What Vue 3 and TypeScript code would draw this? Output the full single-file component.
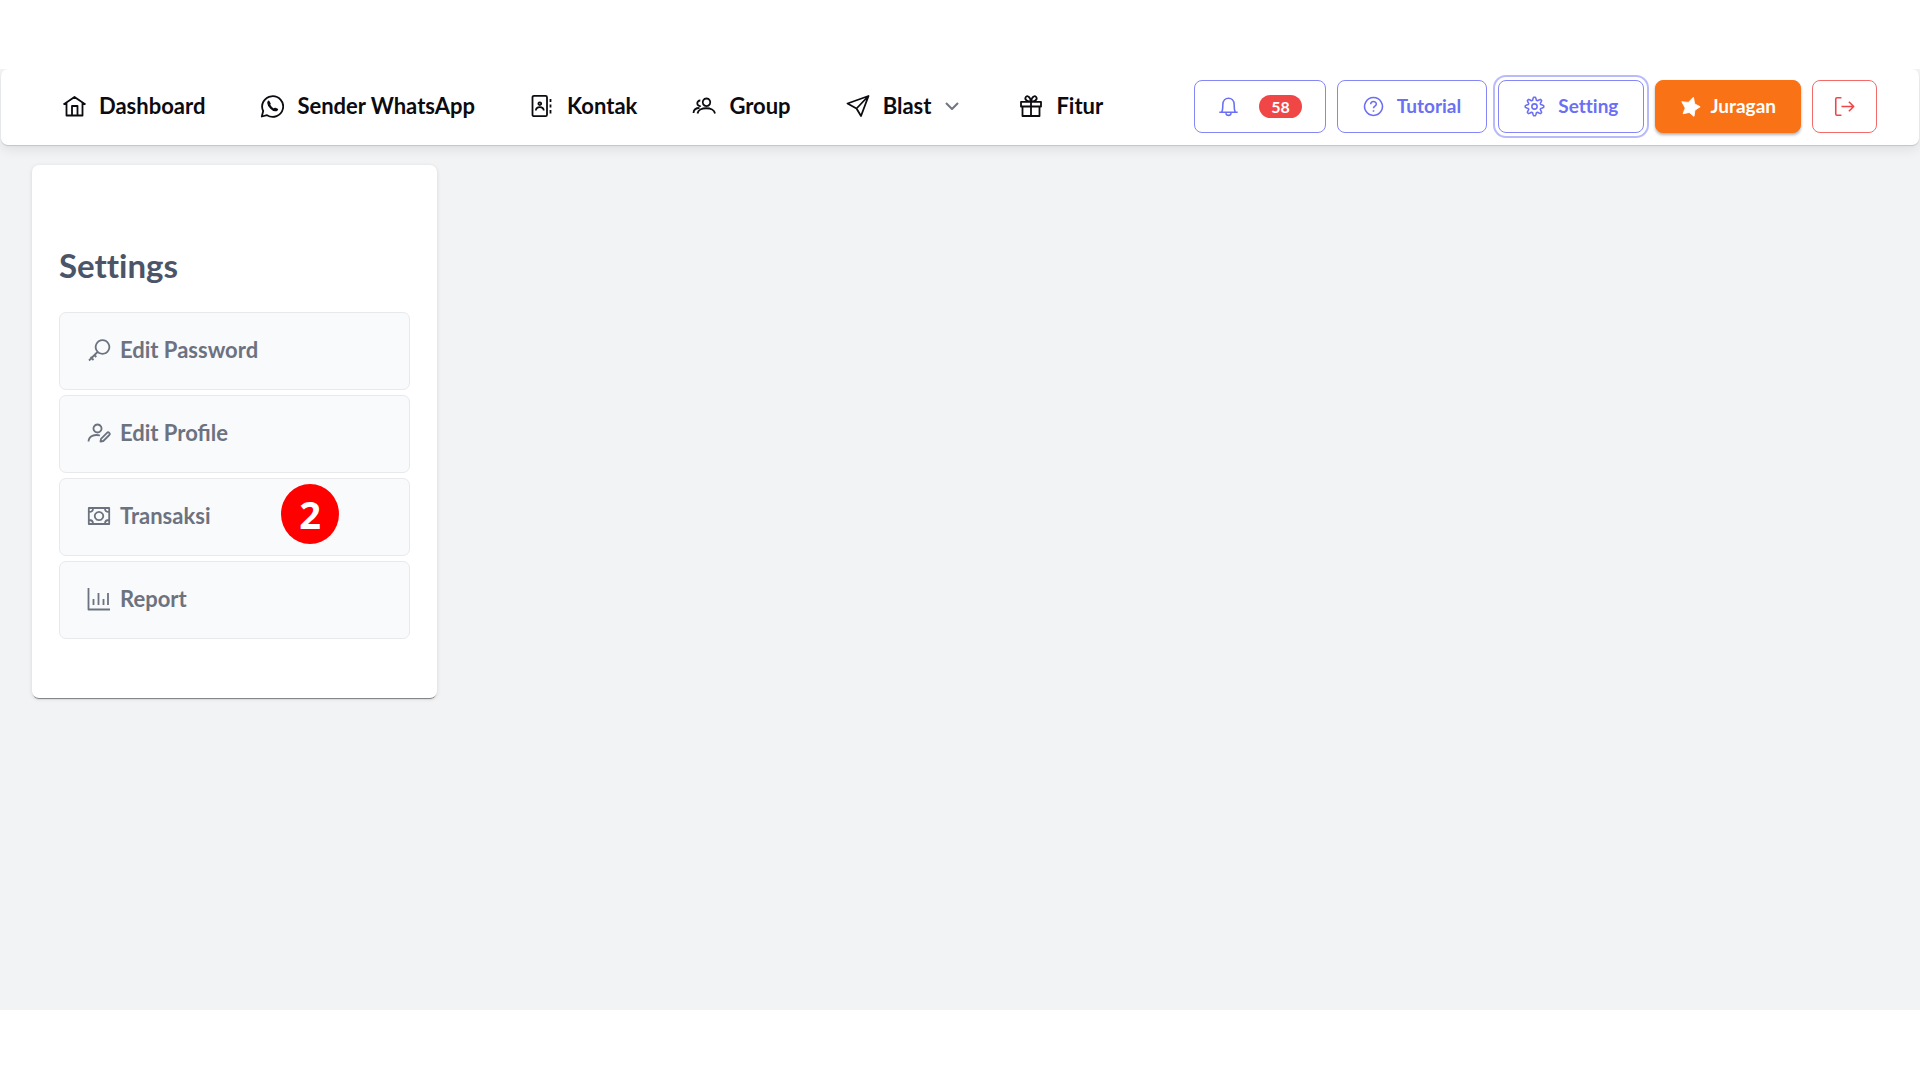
<script setup lang="ts">
interface Entry {
  label: string
  icon: string
  menu?: boolean
}

const links: Entry[] = [
  { label: 'Dashboard', icon: 'home' },
  { label: 'Sender WhatsApp', icon: 'whatsapp' },
  { label: 'Kontak', icon: 'contact' },
  { label: 'Group', icon: 'group' },
  { label: 'Blast', icon: 'send', menu: true },
  { label: 'Fitur', icon: 'gift' },
]

const settings: Entry[] = [
  { label: 'Edit Password', icon: 'key' },
  { label: 'Edit Profile', icon: 'profile' },
  { label: 'Transaksi', icon: 'cash' },
  { label: 'Report', icon: 'chart' },
]

const step = 2
const stepAt = 'Transaksi'

const icons: Record<string, string> = {
  home: 'M1.5 10.5 12.5 3l11 7.5M4.5 9v12.5h16V9M10 21.5V12h5.500v9.500',
  whatsapp:
    'M1.800 22.500 3.200 17A10.500 10.300 0 1 1 7 21.200ZM8.600 7.500C7.300 9.500 9 12 11 14s4.500 3.200 6.200 1.500l-2-.9-1.500.9C11.800 14.500 10.300 13 9.300 11L9.800 9.600Z',
  contact:
    'M4 1.800h11.500a1.500 1.500 0 0 1 1.500 1.500v17.400a1.500 1.500 0 0 1-1.500 1.500H4a1.500 1.500 0 0 1-1.500-1.500V3.300A1.500 1.500 0 0 1 4 1.800ZM9.800 8.300a1.400 1.400 0 1 0 .01 0ZM5.800 16.500c.6-4.500 7.400-4.500 8 0M20.500 5v3M20.500 10.500v3M20.500 16v3.500',
  group:
    'M14.500 4.500a3.800 3.800 0 1 0 .01 0ZM8.300 6.500a2.800 2.800 0 1 0 .5 5.500M5.500 19.500c1-7 16.500-7 17.500 0M1.500 19c.2-3.500 2.500-5 6-5',
  send: 'M1.500 9.500 22.500 2l-7.500 20-4.500-7.500ZM10.500 14.500 22.500 2',
  chevron: 'M6 9l6 6 6-6',
  gift:
    'M2 7.800h20v4.700H2ZM3.500 12.500h17v9.500h-17ZM12 7.800V22M12 7.500C9 7.500 5.500 6 6.500 3.500S11 2 12 7.500M12 7.500c3 0 6.500-1.500 5.500-4S13 2 12 7.500',
  bell: 'M1.500 18.500h21M4 18.500c1.500-1.500 1.500-4.500 1.500-8.500C5.500 0 18.500 0 18.500 10c0 4 0 7 1.500 8.500M9 19.500c.5 3.500 5.500 3.500 6 0',
  help: 'M12 1.800a10.200 10.200 0 1 0 .01 0ZM8.800 9.500c0-4.500 6.600-4.200 6.400 0-.1 2-3.200 2.300-3.200 4.500M12 16.200v1.800',
  key: 'M15.500 2.200a6.800 6.800 0 1 0 .01 0ZM10.500 14 2 22.500M3.500 19l3 3M6.800 16.500l2.500 2.500',
  profile:
    'M10.500 3.500a4 4 0 1 0 .01 0ZM1.500 20.500c.3-5.500 6-7.500 11.500-6M13.500 20.500l.5-2.700 6-6c1.500-1.500 3.700.7 2.300 2.200l-6 6Z',
  cash:
    'M1.800 4h20.400v16H1.800ZM12 7.800a4.200 4.200 0 1 0 .01 0ZM6 4.500C6 7 4.500 8 2 8M18 4.500C18 7 19.500 8 22 8M6 19.500C6 17 4.500 16 2 16M18 19.500c0-2.500 1.500-3.500 4-3.500',
  chart: 'M1.500 1v21.500H23M6.500 12v6M11.500 6v12M16.500 12v6M21 6v12',
  logout: 'M8.500 2H3.500a1.500 1.500 0 0 0-1.500 1.500v17A1.500 1.500 0 0 0 3.500 22h5M8.500 12h14M17 6.500l5.500 5.500-5.500 5.500',
}

/* Outline of the settings cog: eight rounded teeth around the centre. */
const cog = Array.from({ length: 64 }, (_, i) => {
  const a = (i / 64) * Math.PI * 2
  const r = 9 + 1.7 * Math.tanh(2 * Math.cos(8 * a))
  return `${(12 + r * Math.sin(a)).toFixed(2)},${(12 - r * Math.cos(a)).toFixed(2)}`
}).join(' ')
</script>

<template>
  <div class="page">
    <header class="bar">
      <nav class="links">
        <a v-for="l in links" :key="l.label" href="#" class="link">
          <svg class="icon" viewBox="0 0 24 24"><path :d="icons[l.icon]" /></svg>
          <span>{{ l.label }}</span>
          <svg v-if="l.menu" class="chevron" viewBox="0 0 24 24"><path :d="icons.chevron" /></svg>
        </a>
      </nav>
      <div class="actions">
        <button type="button" class="btn btn-bell" aria-label="Notifications">
          <svg class="small" viewBox="0 0 24 24"><path :d="icons.bell" /></svg>
          <span class="count">58</span>
        </button>
        <button type="button" class="btn">
          <svg class="small" viewBox="0 0 24 24"><path :d="icons.help" /></svg>
          <span>Tutorial</span>
        </button>
        <button type="button" class="btn active">
          <svg class="small" viewBox="0 0 24 24">
            <polygon :points="cog" />
            <circle cx="12" cy="12" r="3" />
          </svg>
          <span>Setting</span>
        </button>
        <button type="button" class="btn plan">
          <svg class="small star" viewBox="0 0 24 24">
            <path d="M15.300 1.500l1.500 7.500 6.200 3.300-6 4-1 7-5.500-4.500-7 1.500 2.500-6.500L2 6.500l7.500.8Z" />
          </svg>
          <span>Juragan</span>
        </button>
        <button type="button" class="btn exit" aria-label="Logout">
          <svg class="small" viewBox="0 0 24 24"><path :d="icons.logout" /></svg>
        </button>
      </div>
    </header>

    <main class="body">
      <aside class="card">
        <h1>Settings</h1>
        <ul class="list">
          <li v-for="s in settings" :key="s.label" class="row">
            <a href="#" class="entry">
              <svg class="icon" viewBox="0 0 24 24"><path :d="icons[s.icon]" /></svg>
              <span>{{ s.label }}</span>
            </a>
            <span v-if="s.label === stepAt" class="step">{{ step }}</span>
          </li>
        </ul>
      </aside>
    </main>
  </div>
</template>

<style>
body {
  margin: 0;
  background: #fff;
}
</style>

<style scoped>
.page {
  box-sizing: border-box;
  margin: 69px 0 70px;
  min-height: calc(100vh - 139px);
  background: #f2f3f5;
  font-family: Lato, "Liberation Sans", sans-serif;
}

a {
  color: inherit;
  text-decoration: none;
}

svg {
  flex: none;
  fill: none;
  stroke: currentColor;
  stroke-width: 1.8;
  stroke-linejoin: round;
}

.bar {
  box-sizing: border-box;
  display: flex;
  align-items: center;
  justify-content: space-between;
  min-height: 76px;
  margin: 0 1px;
  padding: 0 42px 2px 61px;
  border-radius: 7px;
  background: #fff;
  box-shadow: 0 1px 1px rgba(0, 0, 0, 0.14), 0 5px 12px rgba(0, 0, 0, 0.08);
  clip-path: inset(0 -1px -24px -1px);
}

.links {
  display: flex;
  gap: 55px;
}

.link {
  display: flex;
  align-items: center;
  font-size: 22px;
  font-weight: 700;
  line-height: 32px;
  color: #0b0b10;
}

.icon {
  width: 24px;
  height: 24px;
  margin-right: 13px;
}

.chevron {
  width: 24px;
  height: 24px;
  margin-left: 9px;
  color: #71757f;
  stroke-width: 2;
}

.actions {
  display: flex;
  gap: 11px;
}

.btn {
  box-sizing: border-box;
  display: flex;
  align-items: center;
  gap: 13px;
  height: 53px;
  padding: 0 25px;
  border: 1px solid #8487f5;
  border-radius: 8px;
  background: #fff;
  font: 700 19px/28px Lato, "Liberation Sans", sans-serif;
  font-variant-ligatures: none;
  color: #6b6ff3;
}

.small {
  width: 21px;
  height: 21px;
}

.btn-bell {
  gap: 20px;
  padding: 0 23px;
}

.count {
  padding: 0 12px;
  border-radius: 12px;
  background: #f04646;
  font-size: 16px;
  line-height: 23px;
  color: #fff;
}

.active {
  box-shadow: 0 0 0 3px #fff, 0 0 0 5px #b9baf9;
}

.plan {
  gap: 9px;
  padding: 0 24px;
  border-color: #f97316;
  background: #f97316;
  box-shadow: 0 2px 3px rgba(0, 0, 0, 0.3);
  color: #fff;
}

.star {
  fill: currentColor;
  stroke-width: 1;
}

.exit {
  padding: 0 21px;
  border-color: #f26a6a;
  color: #ef4444;
}

.body {
  padding: 20px 32px;
}

.card {
  box-sizing: border-box;
  width: 405px;
  padding: 80px 27px 59px;
  border-radius: 7px;
  background: #fff;
  box-shadow: 0 2px 1px -1px rgba(0, 0, 0, 0.45), 0 1px 4px rgba(0, 0, 0, 0.12);
}

h1 {
  margin: 0 0 27px;
  font-size: 33px;
  font-weight: 700;
  font-variant-ligatures: none;
  line-height: 40px;
  color: #4b5567;
}

.list {
  display: flex;
  flex-direction: column;
  gap: 5px;
  margin: 0;
  padding: 0;
  list-style: none;
}

.row {
  position: relative;
}

.entry {
  box-sizing: border-box;
  display: flex;
  align-items: center;
  height: 78px;
  padding: 0 27px 3px;
  border: 1px solid #e7e9ec;
  border-radius: 7px;
  background: #f9fafc;
  font-size: 22px;
  font-weight: 700;
  color: #6c727f;
}

.entry .icon {
  margin-right: 9px;
}

.step {
  position: absolute;
  top: 6px;
  left: 222px;
  width: 58px;
  height: 60px;
  border-radius: 50%;
  background: #f00;
  font: 700 38px/60px "Open Sans", "Noto Sans", sans-serif;
  text-align: center;
  color: #fff;
}
</style>
